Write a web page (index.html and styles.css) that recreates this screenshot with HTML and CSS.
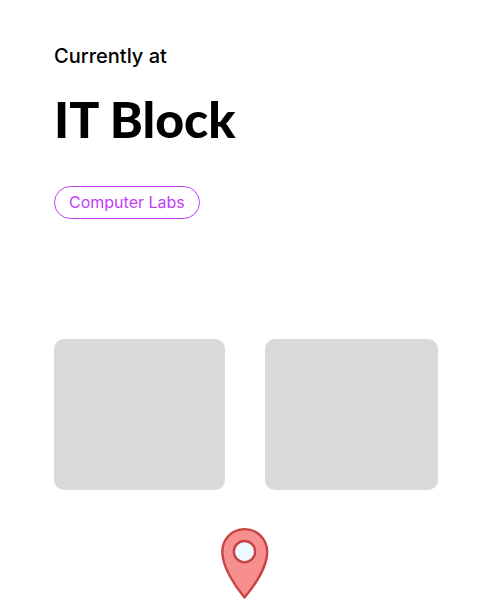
FILE: index.html
```html
<!DOCTYPE html>
<html lang="en">
<head>
<meta charset="utf-8">
<meta name="viewport" content="width=device-width, initial-scale=1">
<title>IT Block</title>
<link rel="stylesheet" href="styles.css">
</head>
<body>
<main class="page">
  <p class="eyebrow">Currently at</p>
  <h1 class="title">IT Block</h1>
  <button class="chip" type="button">Computer Labs</button>
  <div class="cards">
    <div class="card"></div>
    <div class="card"></div>
  </div>
</main>
<footer class="marker">
  <svg class="pin" viewBox="0 0 48 72" aria-hidden="true">
    <path d="M23.500 70.500C13 58 1 39 1 24C1 11 11 1.200 23.500 1.200S46.500 11 46.500 24C46.500 39 34 58 23.500 70.500Z" fill="#f78f8f" stroke="#c74343" stroke-width="2.400" stroke-linejoin="round"/>
    <circle cx="23.500" cy="24" r="10.800" fill="#f0f8ff" stroke="#c74343" stroke-width="2.400"/>
  </svg>
</footer>
</body>
</html>
```
FILE: styles.css
```css
* {
  box-sizing: border-box;
}

body {
  margin: 0;
  background: #fff;
  color: #000;
  font-family: Inter, "Liberation Sans", sans-serif;
}

.page {
  display: flex;
  flex-direction: column;
  align-items: flex-start;
  padding: 44px 52px 0 54px;
}

.eyebrow {
  margin: 0;
  font-size: 20px;
  font-weight: 500;
  line-height: 24px;
}

.title {
  margin: 19px 0 0;
  font-family: Lato, Inter, sans-serif;
  font-size: 50px;
  font-weight: 900;
  line-height: 64px;
}

.chip {
  height: 33px;
  margin-top: 35px;
  padding: 0 14px 2px;
  border: 1px solid #c43cf5;
  border-radius: 17px;
  background: #fff;
  color: #c43cf5;
  font: inherit;
  font-size: 16px;
}

.cards {
  display: grid;
  grid-template-columns: 171fr 173fr;
  gap: 40px;
  width: 100%;
  margin-top: 120px;
}

.card {
  height: 151px;
  border-radius: 10px;
  background: #d9d9d9;
}

.marker {
  display: flex;
  justify-content: center;
  padding-top: 38px;
}

.pin {
  width: 48px;
  height: 71px;
}
```
